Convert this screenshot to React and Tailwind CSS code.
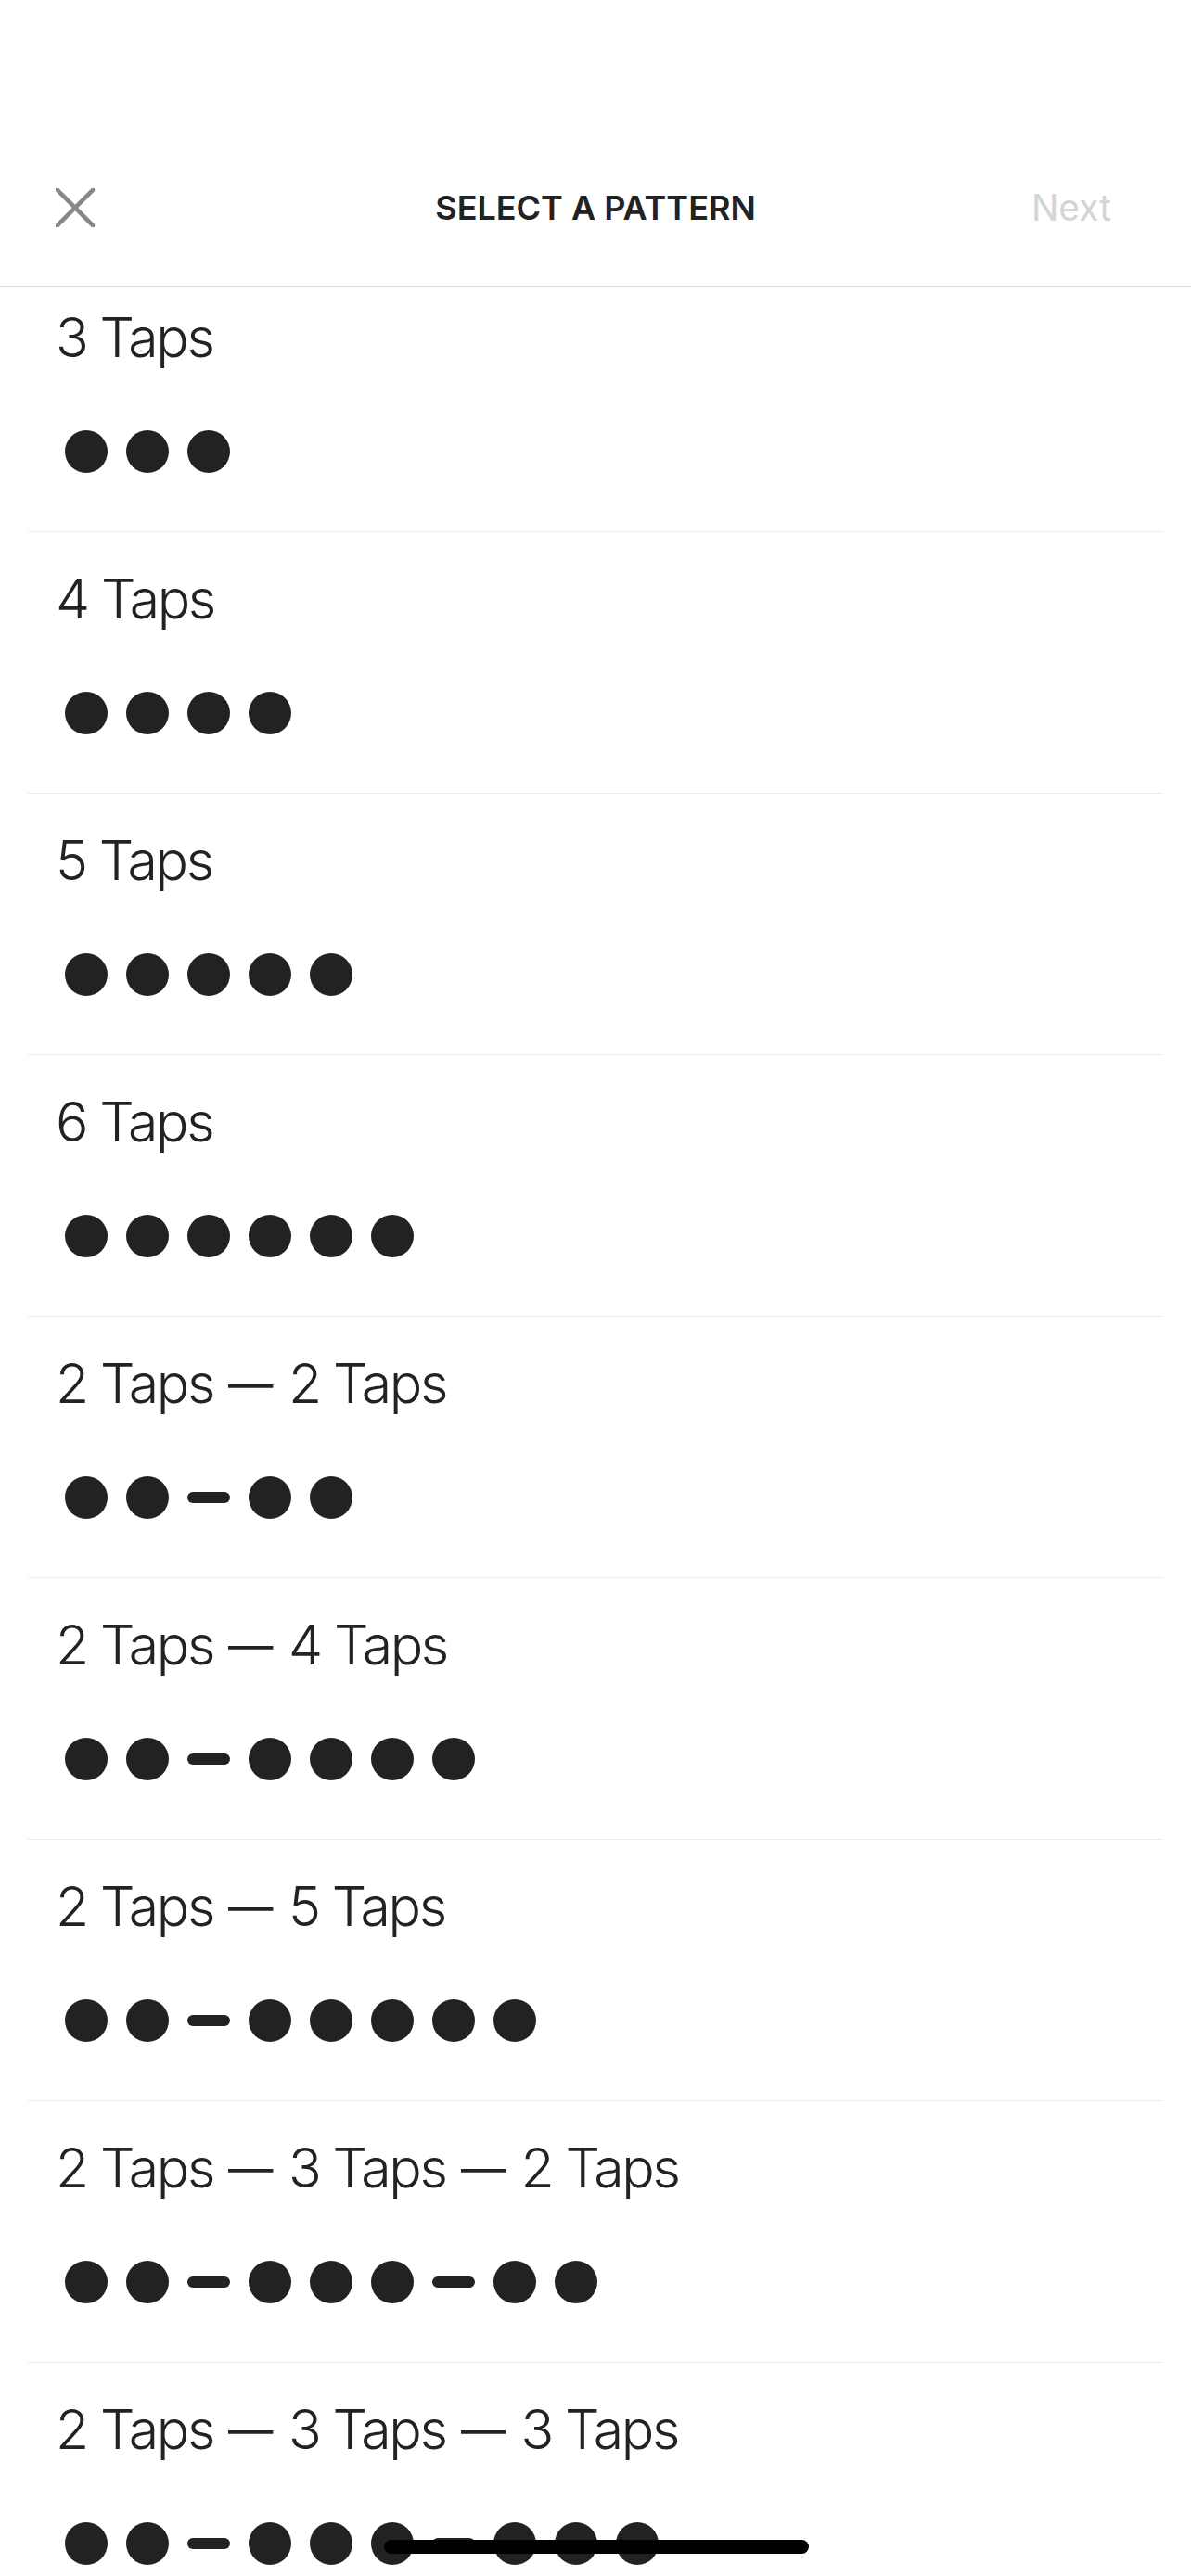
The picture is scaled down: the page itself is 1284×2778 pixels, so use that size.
import React from "react";

const patterns = [
  [3],
  [4],
  [5],
  [6],
  [2, 2],
  [2, 4],
  [2, 5],
  [2, 3, 2],
  [2, 3, 3],
];

function Dots({ groups }) {
  const items = [];
  groups.forEach((n, gi) => {
    if (gi > 0) items.push(<div key={`d${gi}`} className="w-[46px] h-[12px] rounded-full bg-[#222222]" />);
    for (let i = 0; i < n; i++) {
      items.push(<div key={`${gi}-${i}`} className="w-[46px] h-[46px] rounded-full bg-[#222222]" />);
    }
  });
  return <div className="flex items-center gap-[20px] h-[46px] ml-[40px]">{items}</div>;
}

function Row({ groups, first }) {
  return (
    <div className={`mx-[30px] border-b border-[#ececec] ${first ? "-mt-[18px]" : ""}`}>
      <div className="pt-[42px] pb-[63px]">
        <div
          className="pl-[30px] text-[59px] leading-[59px] font-light tracking-[-2.4px] text-[#222222] whitespace-nowrap"
          style={{ fontFamily: "Inter, 'Noto Sans', sans-serif" }}
        >
          {groups.map((n, i) => (
            <React.Fragment key={i}>
              {i > 0 && (
                <span className="inline-block mx-[16px] tracking-normal">
                  <span className="inline-block origin-left scale-x-[0.82] -mr-[10px]">—</span>
                </span>
              )}
              {`${n} Taps`}
            </React.Fragment>
          ))}
        </div>
        <div className="mt-[71px]">
          <Dots groups={groups} />
        </div>
      </div>
    </div>
  );
}

export default function App() {
  return (
    <div
      className="relative w-[1284px] h-[2778px] overflow-hidden bg-white"
      style={{ fontFamily: "Inter, 'Noto Sans', sans-serif" }}
    >
      <div className="relative z-10 bg-white pt-[140px] border-b-2 border-[#e0e0e0]">
        <div className="flex items-center h-[168px]">
          <div className="w-[200px] pl-[60px] flex items-center">
            <svg width="42" height="42" viewBox="0 0 42 42">
              <line x1="1.5" y1="1.5" x2="40.5" y2="40.5" stroke="#878787" strokeWidth="4.5" strokeLinecap="square" />
              <line x1="40.5" y1="1.5" x2="1.5" y2="40.5" stroke="#878787" strokeWidth="4.5" strokeLinecap="square" />
            </svg>
          </div>
          <div className="flex-1 text-center text-[36px] font-semibold tracking-[0px] text-[#222222]">
            SELECT A PATTERN
          </div>
          <div className="w-[200px] pr-[86px] text-right text-[39px] text-[#d4d4d4]">Next</div>
        </div>
      </div>
      <div>
        {patterns.map((g, i) => (
          <Row key={i} groups={g} first={i === 0} />
        ))}
      </div>
      <div className="absolute left-[414px] bottom-[24px] w-[458px] h-[15px] rounded-full bg-black z-20" />
    </div>
  );
}
